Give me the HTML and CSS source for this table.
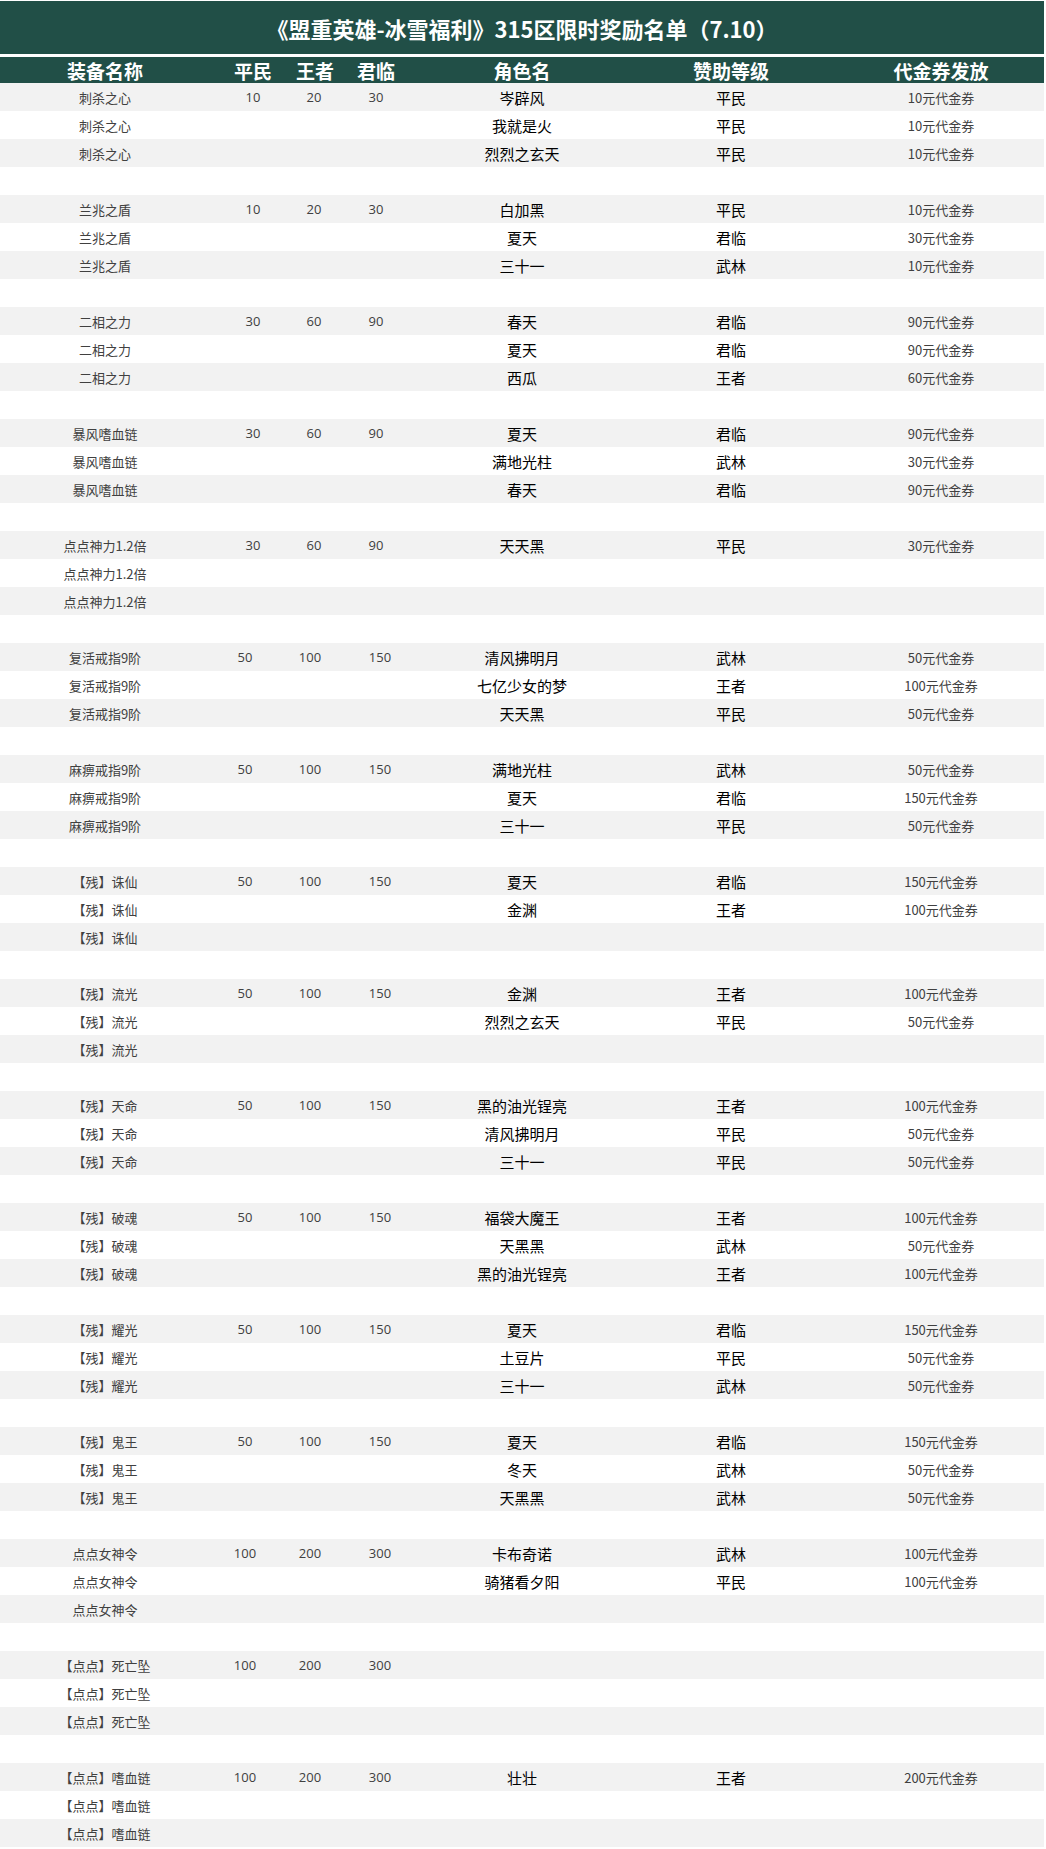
FILE: index.html
```html
<!DOCTYPE html>
<html lang="zh-CN">
<head>
<meta charset="utf-8">
<title>315区限时奖励名单</title>
<link rel="stylesheet" href="styles.css">
</head>
<body>
<div class="sheet">
  <div class="title">《盟重英雄-冰雪福利》315区限时奖励名单（7.10）</div>
  <table class="grid">
    <colgroup>
      <col class="c-item"><col class="c-n1"><col class="c-n2"><col class="c-n3"><col class="c-role"><col class="c-level"><col class="c-pay">
    </colgroup>
    <thead>
      <tr class="head"><th>装备名称</th><th>平民</th><th>王者</th><th>君临</th><th>角色名</th><th>赞助等级</th><th>代金券发放</th></tr>
    </thead>
    <tbody>
      <tr><td class="item">刺杀之心</td><td class="num">10</td><td class="num">20</td><td class="num">30</td><td class="role">岑辟风</td><td class="level">平民</td><td class="pay">10元代金券</td></tr>
      <tr><td class="item">刺杀之心</td><td></td><td></td><td></td><td class="role">我就是火</td><td class="level">平民</td><td class="pay">10元代金券</td></tr>
      <tr><td class="item">刺杀之心</td><td></td><td></td><td></td><td class="role">烈烈之玄天</td><td class="level">平民</td><td class="pay">10元代金券</td></tr>
      <tr class="blank"><td colspan="7"></td></tr>

      <tr><td class="item">兰兆之盾</td><td class="num">10</td><td class="num">20</td><td class="num">30</td><td class="role">白加黑</td><td class="level">平民</td><td class="pay">10元代金券</td></tr>
      <tr><td class="item">兰兆之盾</td><td></td><td></td><td></td><td class="role">夏天</td><td class="level">君临</td><td class="pay">30元代金券</td></tr>
      <tr><td class="item">兰兆之盾</td><td></td><td></td><td></td><td class="role">三十一</td><td class="level">武林</td><td class="pay">10元代金券</td></tr>
      <tr class="blank"><td colspan="7"></td></tr>

      <tr><td class="item">二相之力</td><td class="num">30</td><td class="num">60</td><td class="num">90</td><td class="role">春天</td><td class="level">君临</td><td class="pay">90元代金券</td></tr>
      <tr><td class="item">二相之力</td><td></td><td></td><td></td><td class="role">夏天</td><td class="level">君临</td><td class="pay">90元代金券</td></tr>
      <tr><td class="item">二相之力</td><td></td><td></td><td></td><td class="role">西瓜</td><td class="level">王者</td><td class="pay">60元代金券</td></tr>
      <tr class="blank"><td colspan="7"></td></tr>

      <tr><td class="item">暴风嗜血链</td><td class="num">30</td><td class="num">60</td><td class="num">90</td><td class="role">夏天</td><td class="level">君临</td><td class="pay">90元代金券</td></tr>
      <tr><td class="item">暴风嗜血链</td><td></td><td></td><td></td><td class="role">满地光柱</td><td class="level">武林</td><td class="pay">30元代金券</td></tr>
      <tr><td class="item">暴风嗜血链</td><td></td><td></td><td></td><td class="role">春天</td><td class="level">君临</td><td class="pay">90元代金券</td></tr>
      <tr class="blank"><td colspan="7"></td></tr>

      <tr><td class="item">点点神力1.2倍</td><td class="num">30</td><td class="num">60</td><td class="num">90</td><td class="role">天天黑</td><td class="level">平民</td><td class="pay">30元代金券</td></tr>
      <tr><td class="item">点点神力1.2倍</td><td></td><td></td><td></td><td></td><td></td><td></td></tr>
      <tr><td class="item">点点神力1.2倍</td><td></td><td></td><td></td><td></td><td></td><td></td></tr>
      <tr class="blank"><td colspan="7"></td></tr>

      <tr class="wide"><td class="item">复活戒指9阶</td><td class="num">50</td><td class="num">100</td><td class="num">150</td><td class="role">清风拂明月</td><td class="level">武林</td><td class="pay">50元代金券</td></tr>
      <tr><td class="item">复活戒指9阶</td><td></td><td></td><td></td><td class="role">七亿少女的梦</td><td class="level">王者</td><td class="pay">100元代金券</td></tr>
      <tr><td class="item">复活戒指9阶</td><td></td><td></td><td></td><td class="role">天天黑</td><td class="level">平民</td><td class="pay">50元代金券</td></tr>
      <tr class="blank"><td colspan="7"></td></tr>

      <tr class="wide"><td class="item">麻痹戒指9阶</td><td class="num">50</td><td class="num">100</td><td class="num">150</td><td class="role">满地光柱</td><td class="level">武林</td><td class="pay">50元代金券</td></tr>
      <tr><td class="item">麻痹戒指9阶</td><td></td><td></td><td></td><td class="role">夏天</td><td class="level">君临</td><td class="pay">150元代金券</td></tr>
      <tr><td class="item">麻痹戒指9阶</td><td></td><td></td><td></td><td class="role">三十一</td><td class="level">平民</td><td class="pay">50元代金券</td></tr>
      <tr class="blank"><td colspan="7"></td></tr>

      <tr class="wide"><td class="item">【残】诛仙</td><td class="num">50</td><td class="num">100</td><td class="num">150</td><td class="role">夏天</td><td class="level">君临</td><td class="pay">150元代金券</td></tr>
      <tr><td class="item">【残】诛仙</td><td></td><td></td><td></td><td class="role">金渊</td><td class="level">王者</td><td class="pay">100元代金券</td></tr>
      <tr><td class="item">【残】诛仙</td><td></td><td></td><td></td><td></td><td></td><td></td></tr>
      <tr class="blank"><td colspan="7"></td></tr>

      <tr class="wide"><td class="item">【残】流光</td><td class="num">50</td><td class="num">100</td><td class="num">150</td><td class="role">金渊</td><td class="level">王者</td><td class="pay">100元代金券</td></tr>
      <tr><td class="item">【残】流光</td><td></td><td></td><td></td><td class="role">烈烈之玄天</td><td class="level">平民</td><td class="pay">50元代金券</td></tr>
      <tr><td class="item">【残】流光</td><td></td><td></td><td></td><td></td><td></td><td></td></tr>
      <tr class="blank"><td colspan="7"></td></tr>

      <tr class="wide"><td class="item">【残】天命</td><td class="num">50</td><td class="num">100</td><td class="num">150</td><td class="role">黑的油光锃亮</td><td class="level">王者</td><td class="pay">100元代金券</td></tr>
      <tr><td class="item">【残】天命</td><td></td><td></td><td></td><td class="role">清风拂明月</td><td class="level">平民</td><td class="pay">50元代金券</td></tr>
      <tr><td class="item">【残】天命</td><td></td><td></td><td></td><td class="role">三十一</td><td class="level">平民</td><td class="pay">50元代金券</td></tr>
      <tr class="blank"><td colspan="7"></td></tr>

      <tr class="wide"><td class="item">【残】破魂</td><td class="num">50</td><td class="num">100</td><td class="num">150</td><td class="role">福袋大魔王</td><td class="level">王者</td><td class="pay">100元代金券</td></tr>
      <tr><td class="item">【残】破魂</td><td></td><td></td><td></td><td class="role">天黑黑</td><td class="level">武林</td><td class="pay">50元代金券</td></tr>
      <tr><td class="item">【残】破魂</td><td></td><td></td><td></td><td class="role">黑的油光锃亮</td><td class="level">王者</td><td class="pay">100元代金券</td></tr>
      <tr class="blank"><td colspan="7"></td></tr>

      <tr class="wide"><td class="item">【残】耀光</td><td class="num">50</td><td class="num">100</td><td class="num">150</td><td class="role">夏天</td><td class="level">君临</td><td class="pay">150元代金券</td></tr>
      <tr><td class="item">【残】耀光</td><td></td><td></td><td></td><td class="role">土豆片</td><td class="level">平民</td><td class="pay">50元代金券</td></tr>
      <tr><td class="item">【残】耀光</td><td></td><td></td><td></td><td class="role">三十一</td><td class="level">武林</td><td class="pay">50元代金券</td></tr>
      <tr class="blank"><td colspan="7"></td></tr>

      <tr class="wide"><td class="item">【残】鬼王</td><td class="num">50</td><td class="num">100</td><td class="num">150</td><td class="role">夏天</td><td class="level">君临</td><td class="pay">150元代金券</td></tr>
      <tr><td class="item">【残】鬼王</td><td></td><td></td><td></td><td class="role">冬天</td><td class="level">武林</td><td class="pay">50元代金券</td></tr>
      <tr><td class="item">【残】鬼王</td><td></td><td></td><td></td><td class="role">天黑黑</td><td class="level">武林</td><td class="pay">50元代金券</td></tr>
      <tr class="blank"><td colspan="7"></td></tr>

      <tr class="wide"><td class="item">点点女神令</td><td class="num">100</td><td class="num">200</td><td class="num">300</td><td class="role">卡布奇诺</td><td class="level">武林</td><td class="pay">100元代金券</td></tr>
      <tr><td class="item">点点女神令</td><td></td><td></td><td></td><td class="role">骑猪看夕阳</td><td class="level">平民</td><td class="pay">100元代金券</td></tr>
      <tr><td class="item">点点女神令</td><td></td><td></td><td></td><td></td><td></td><td></td></tr>
      <tr class="blank"><td colspan="7"></td></tr>

      <tr class="wide"><td class="item">【点点】死亡坠</td><td class="num">100</td><td class="num">200</td><td class="num">300</td><td></td><td></td><td></td></tr>
      <tr><td class="item">【点点】死亡坠</td><td></td><td></td><td></td><td></td><td></td><td></td></tr>
      <tr><td class="item">【点点】死亡坠</td><td></td><td></td><td></td><td></td><td></td><td></td></tr>
      <tr class="blank"><td colspan="7"></td></tr>

      <tr class="wide"><td class="item">【点点】嗜血链</td><td class="num">100</td><td class="num">200</td><td class="num">300</td><td class="role">壮壮</td><td class="level">王者</td><td class="pay">200元代金券</td></tr>
      <tr><td class="item">【点点】嗜血链</td><td></td><td></td><td></td><td></td><td></td><td></td></tr>
      <tr><td class="item">【点点】嗜血链</td><td></td><td></td><td></td><td></td><td></td><td></td></tr>
    </tbody>
  </table>
</div>
</body>
</html>
```

FILE: styles.css
```css
html, body {
  margin: 0;
  padding: 0;
  background: #ffffff;
}

body {
  font-family: "Noto Sans CJK SC", "Noto Sans", sans-serif;
}

.sheet {
  width: 1044px;
  padding-top: 1px;
}

.title {
  height: 53px;
  background: #214f47;
  color: #ffffff;
  font-size: 22px;
  font-weight: 700;
  display: flex;
  align-items: center;
  justify-content: center;
  line-height: 1;
  margin-bottom: 3px;
}

.grid {
  width: 1044px;
  table-layout: fixed;
  border-collapse: collapse;
  border-spacing: 0;
}

.c-item { width: 210px; }
.c-n1 { width: 86px; }
.c-n2 { width: 36px; }
.c-n3 { width: 88px; }
.c-role { width: 204px; }
.c-level { width: 214px; }
.c-pay { width: 206px; }

.grid th,
.grid td {
  padding: 0;
  text-align: center;
  white-space: nowrap;
  overflow: visible;
  line-height: 1;
}

.head {
  background: #214f47;
  height: 26px;
}

.head th {
  color: #ffffff;
  font-size: 19px;
  font-weight: 700;
  height: 26px;
}

.grid tbody tr {
  height: 28px;
}

.grid tbody td {
  height: 28px;
}

.grid tbody tr:nth-child(odd) {
  background: #f2f2f2;
}

.item {
  font-size: 13px;
  color: #404040;
}

.num {
  font-size: 13px;
  color: #404040;
  font-family: "Open Sans", "Noto Sans", sans-serif;
}

.wide .num:nth-child(2) { padding-right: 16px; }
.wide .num:nth-child(3) { padding-right: 8px; }
.wide .num:nth-child(4) { padding-left: 8px; }

.role {
  font-size: 15px;
  color: #000000;
}

.level {
  font-size: 15px;
  color: #000000;
}

.pay {
  font-size: 13px;
  color: #404040;
}
```
